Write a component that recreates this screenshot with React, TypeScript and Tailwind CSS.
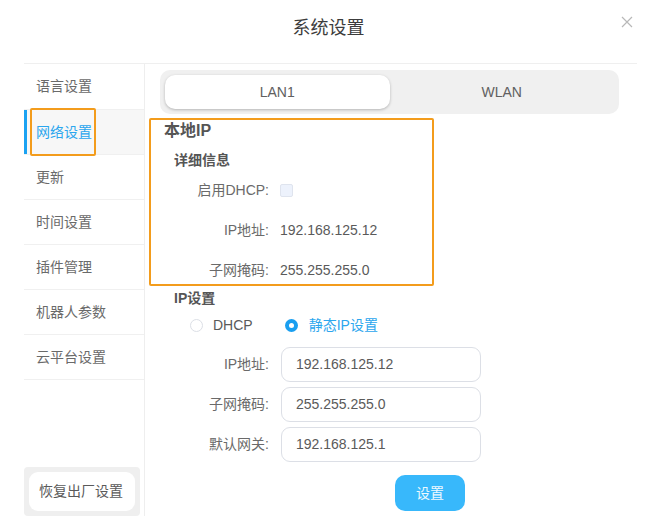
import React from 'react'

const menu = ['语言设置', '网络设置', '更新', '时间设置', '插件管理', '机器人参数', '云平台设置']

function Row({ label, children }: { label: string; children: React.ReactNode }) {
  return (
    <div className="flex items-center h-[40px]">
      <div className="w-[118px] text-right text-[14px] text-[#6a6a6a]">{label}</div>
      <div className="ml-[11px] flex items-center text-[14px] text-[#5a5a5a]">{children}</div>
    </div>
  )
}

function InputRow({ label, value }: { label: string; value: string }) {
  return (
    <div className="flex items-center h-[35px]">
      <div className="w-[124px] text-right text-[14px] text-[#6a6a6a]">{label}</div>
      <div className="ml-[12px] w-[200px] h-[35px] rounded-[9px] border border-[#dcdfe6] flex items-center pl-[14px] text-[14px] text-[#5a5a5a]">
        {value}
      </div>
    </div>
  )
}

export default function App() {
  return (
    <div
      className="relative w-[655px] h-[528px] bg-white overflow-hidden"
      style={{ fontFamily: '"Liberation Sans", "Noto Sans CJK SC", sans-serif' }}
    >
      <div className="relative ml-[24px] mr-[18px] h-[64px] border-b border-[#efefef] flex justify-center">
        <div className="mt-[15px] text-[18px] leading-[26px] text-[#3c3c3c] pr-[4px]">系统设置</div>
        <svg
          className="absolute right-[4px] top-[16px]"
          width="12"
          height="12"
          viewBox="0 0 12 12"
          fill="none"
          stroke="#b8b8b8"
          strokeWidth="1.2"
        >
          <path d="M1 1L11 11M11 1L1 11" />
        </svg>
      </div>

      <div className="flex ml-[24px] h-[452px]">
        <div className="w-[121px] border-r border-[#eeeeee] flex flex-col">
          {menu.map((m, i) => {
            const active = i === 1
            return (
              <div
                key={m}
                className={`relative flex items-center border-b border-[#f0f0f0] pl-[12px] text-[14px] ${
                  i === 0 ? 'h-[46px]' : 'h-[45px]'
                } ${active ? 'bg-[#f7f7f7] text-[#2ba6ee]' : 'text-[#6a6a6a]'}`}
              >
                {active && <div className="absolute left-0 top-0 bottom-0 w-[3px] bg-[#1aa2f2]" />}
                {m}
                {active && (
                  <div className="absolute left-[6px] top-[-2px] w-[66px] h-[48px] border-2 border-[#f39c1c] rounded-[2px]" />
                )}
              </div>
            )
          })}
          <div className="mt-auto w-[116px] h-[49px] bg-[#efefef] rounded-[4px] p-[5px]">
            <div className="h-[39px] bg-white rounded-[9px] flex items-center pl-[10px] text-[14px] text-[#5a5a5a]">
              恢复出厂设置
            </div>
          </div>
        </div>

        <div className="flex-1 flex flex-col">
          <div className="ml-[15px] mt-[6px] w-[459px] h-[44px] bg-[#f0f0f0] rounded-[10px] p-[5px] flex">
            <div className="flex-1 bg-white rounded-[10px] shadow-[0_1px_3px_rgba(0,0,0,0.25)] flex items-center justify-center text-[14px] text-[#606060]">
              LAN1
            </div>
            <div className="flex-1 flex items-center justify-center text-[14px] text-[#606060]">WLAN</div>
          </div>

          <div className="ml-[4px] mt-[4px] w-[285px] h-[168px] border-2 border-[#f39c1c] rounded-[2px]">
            <div className="pl-[13px] text-[16px] leading-[22px] font-bold text-[#555]">本地IP</div>
            <div className="pl-[23px] mt-[8px] text-[14px] leading-[20px] font-bold text-[#555]">详细信息</div>
            <Row label="启用DHCP:">
              <div className="w-[13px] h-[13px] rounded-[2px] bg-[#edf2fc] border border-[#dfe4ee]" />
            </Row>
            <Row label="IP地址:">192.168.125.12</Row>
            <Row label="子网掩码:">255.255.255.0</Row>
          </div>

          <div className="pl-[29px] mt-[2px] text-[14px] leading-[20px] font-bold text-[#555]">IP设置</div>
          <div className="mt-[5px] h-[24px] flex items-center text-[14px]">
            <div className="ml-[45px] w-[13px] h-[13px] rounded-full border border-[#dcdfe6] bg-white" />
            <div className="ml-[10px] text-[#5a5a5a]">DHCP</div>
            <div className="ml-[32px] w-[13px] h-[13px] rounded-full bg-[#1a9ff0] flex items-center justify-center">
              <div className="w-[5px] h-[5px] rounded-full bg-white" />
            </div>
            <div className="ml-[11px] text-[#2ba6ee]">静态IP设置</div>
          </div>

          <div className="mt-[10px] flex flex-col gap-[5px]">
            <InputRow label="IP地址:" value="192.168.125.12" />
            <InputRow label="子网掩码:" value="255.255.255.0" />
            <InputRow label="默认网关:" value="192.168.125.1" />
          </div>

          <div className="mt-[13px] ml-[250px] w-[70px] h-[36px] rounded-[10px] bg-[#38b8fb] flex items-center justify-center text-[14px] text-[#eef8ff]">
            设置
          </div>
        </div>
      </div>
    </div>
  )
}
